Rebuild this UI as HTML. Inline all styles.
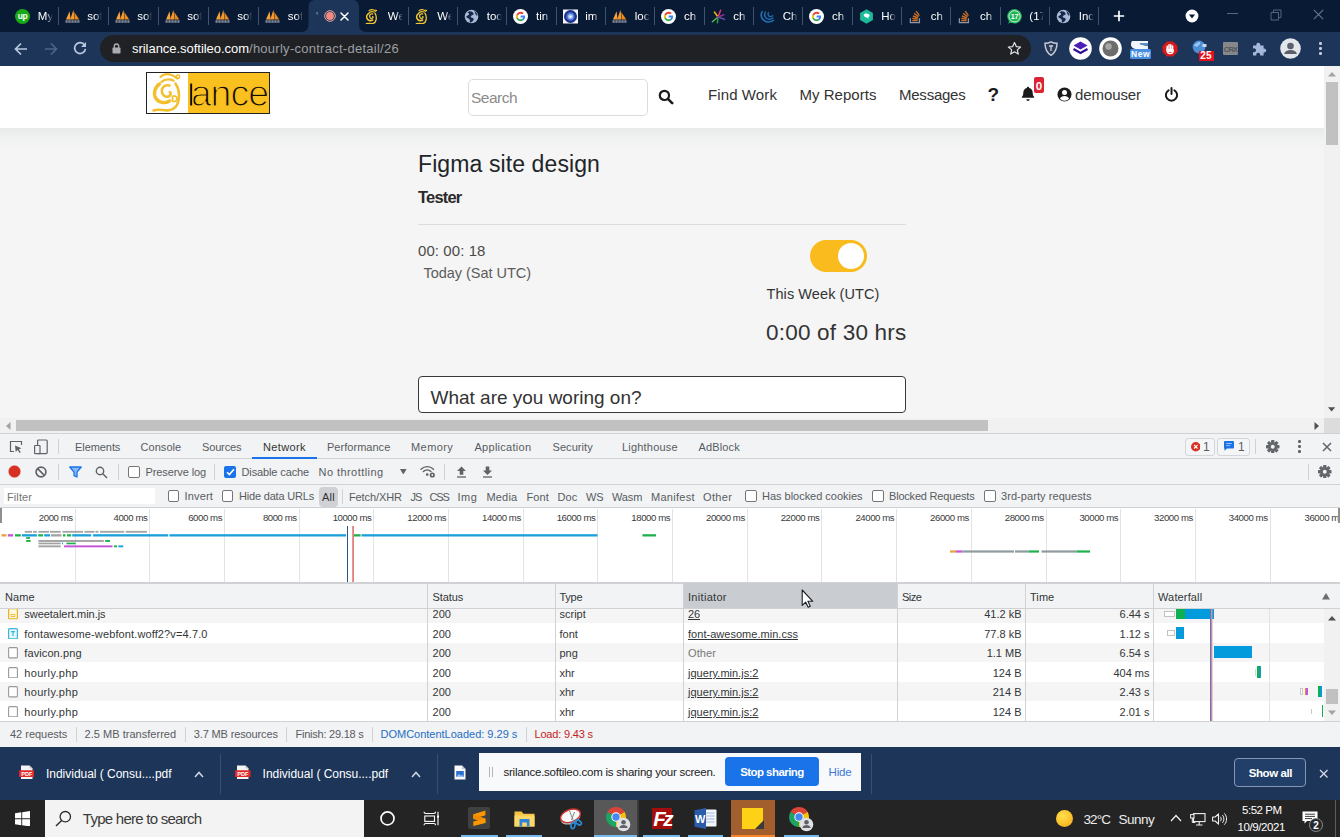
<!DOCTYPE html>
<html lang="en"><head><meta charset="utf-8"><title>hourly-contract-detail</title>
<style>
html,body{margin:0;padding:0}
body{width:1340px;height:837px;position:relative;overflow:hidden;background:#fff;font-family:"Liberation Sans",sans-serif;}
body>div,body>span,body>svg{position:absolute;}
.t{white-space:pre;}
</style></head>
<body>
<div style="left:0px;top:66px;width:1324px;height:352px;background:#f5f5f5;"></div>
<div style="left:0px;top:128px;width:1324px;height:22px;background:linear-gradient(#e8eaea,#f0f1f1 45%,#f5f5f5);"></div>
<div style="left:0px;top:66px;width:1324px;height:62px;background:#fff;"></div>
<div style="left:146px;top:72px;width:124px;height:42px;background:#fff;box-sizing:border-box;border:1px solid #222;"></div>
<div style="left:188px;top:73px;width:81px;height:40px;background:#f9c01f;"></div>
<svg style="left:146px;top:72px;" width="42" height="42" viewBox="0 0 42 42"><g fill="none" stroke="#f3bf2f" stroke-linecap="round" stroke-linejoin="round"><path d="M14.500 5C17 2.500 21 1.800 24.500 2.600 27.500 3.300 29.500 5.500 31.500 6.500" stroke-width="2.200"/><circle cx="32" cy="4.600" r="1.700" stroke-width="1.500"/><path d="M15.500 9.800C18.500 7.300 23.500 6.800 27.500 8.600" stroke-width="2.400"/><path d="M13.500 12C8.500 15.500 7 22 10 26.500 13 31 19.500 31.800 23.500 29" stroke-width="3.400"/><path d="M23.500 13.500C19.500 12.300 15.800 15 15.800 19 15.800 23 19.500 25.800 23 24.300 25 23.300 25.300 21 23.800 20.200" stroke-width="2.600"/><path d="M29.500 11.500C32.500 16 33.500 23 32.500 28.500 31.500 34 28 37.500 23 38.200 17.500 39 13 36.300 7.500 38.500" stroke-width="2.600"/><path d="M26.500 24.500C28.500 23.300 31 24.300 31 26.500 31 29 28.300 30.300 26.500 29Z" stroke-width="1.800"/></g></svg>
<span class="t" id="t0" style="top:72px;font-size:37.5px;line-height:42px;color:#120d02;left:187px;letter-spacing:-0.957px;-webkit-text-stroke:1.250px #f9c01f;"><span style="display:inline-block;letter-spacing:-4.630px;transform:scaleY(.84);transform-origin:0 34px;">l</span>ance</span>
<div style="left:468px;top:79px;width:180px;height:37px;background:#fff;box-sizing:border-box;border:1px solid #dcdcdc;border-radius:5px;"></div>
<span class="t" id="t1" style="top:89px;font-size:15.5px;line-height:17px;color:#8b8b8b;left:471px;letter-spacing:-0.521px;">Search</span>
<svg style="left:657.7px;top:88.8px;" width="16" height="16" viewBox="0 0 16 16"><circle cx="6.4" cy="6.4" r="4.6" fill="none" stroke="#1b1b1b" stroke-width="2.2"/><path d="M9.8 9.8L14.2 14.2" stroke="#1b1b1b" stroke-width="2.6" stroke-linecap="round"/></svg>
<span class="t" id="t2" style="top:86px;font-size:15px;line-height:17px;color:#333;left:708px;letter-spacing:0.102px;">Find Work</span>
<span class="t" id="t3" style="top:86px;font-size:15px;line-height:17px;color:#333;left:799.5px;letter-spacing:0.031px;">My Reports</span>
<span class="t" id="t4" style="top:86px;font-size:15px;line-height:17px;color:#333;left:899px;letter-spacing:-0.234px;">Messages</span>
<span class="t" id="t5" style="top:84px;font-size:19px;line-height:21px;color:#1b1b1b;left:987.5px;font-weight:700;">?</span>
<svg style="left:1021px;top:86px;" width="14" height="16" viewBox="0 0 14 16"><path d="M7 .8c.7 0 1.1.5 1.1 1.100 2.300.5 3.600 2.300 3.600 4.800 0 2.300.7 3.400 1.500 4.300v.7H.8v-.7C1.600 10.100 2.300 9 2.300 6.700c0-2.500 1.300-4.300 3.600-4.800C5.900 1.300 6.300.8 7 .8Z" fill="#1b1b1b"/><path d="M5.300 13.200h3.400a1.700 1.700 0 0 1-3.400 0Z" fill="#1b1b1b"/></svg>
<div style="left:1034px;top:77px;width:10px;height:16px;background:#dc2434;border-radius:2px;"></div>
<span class="t" id="t6" style="top:80px;font-size:11.5px;line-height:12px;color:#fff;left:1035.7px;font-weight:700;">0</span>
<svg style="left:1056.5px;top:87px;" width="15" height="15" viewBox="0 0 15 15"><circle cx="7.5" cy="7.5" r="7" fill="#1b1b1b"/><circle cx="7.5" cy="5.600" r="2.500" fill="#fff"/><path d="M2.900 11.700c.8-1.900 2.500-2.700 4.600-2.700s3.800.8 4.600 2.700A6 6 0 0 1 7.500 13.800 6 6 0 0 1 2.900 11.700Z" fill="#fff"/></svg>
<span class="t" id="t7" style="top:86px;font-size:15px;line-height:17px;color:#333;left:1075px;letter-spacing:-0.088px;">demouser</span>
<svg style="left:1163.5px;top:86.5px;" width="15" height="15" viewBox="0 0 15 15"><path d="M4.600 3.300A5.600 5.600 0 1 0 10.400 3.300" fill="none" stroke="#1b1b1b" stroke-width="2" stroke-linecap="round"/><path d="M7.500 1v6" stroke="#1b1b1b" stroke-width="2" stroke-linecap="round"/></svg>
<span class="t" id="t8" style="top:151px;font-size:23px;line-height:26px;color:#212529;left:418px;letter-spacing:0.103px;">Figma site design</span>
<span class="t" id="t9" style="top:188px;font-size:16.5px;line-height:18px;color:#2a2a2a;left:418px;font-weight:700;letter-spacing:-0.802px;">Tester</span>
<div style="left:418px;top:224px;width:488px;height:1px;background:#dcdcdc;"></div>
<span class="t" id="t10" style="top:242px;font-size:15px;line-height:17px;color:#4a4a4a;left:418px;letter-spacing:0.077px;">00: 00: 18</span>
<span class="t" id="t11" style="top:265px;font-size:14.5px;line-height:16px;color:#5c5c5c;left:423.5px;letter-spacing:-0.032px;">Today (Sat UTC)</span>
<div style="left:810px;top:240px;width:57px;height:32px;background:#f9bb1e;border-radius:16px;"></div>
<div style="left:838px;top:243px;width:26px;height:26px;background:#fff;border-radius:50%;"></div>
<span class="t" id="t12" style="top:286px;font-size:14.5px;line-height:16px;color:#333;left:766.5px;letter-spacing:0.085px;">This Week (UTC)</span>
<span class="t" id="t13" style="top:320px;font-size:22.5px;line-height:25px;color:#333;left:766px;letter-spacing:0.208px;">0:00 of 30 hrs</span>
<div style="left:418px;top:376px;width:488px;height:37px;background:#fff;box-sizing:border-box;border:1px solid #3a3a3a;border-radius:4px;"></div>
<span class="t" id="t14" style="top:387px;font-size:19px;line-height:21px;color:#333;left:430.5px;letter-spacing:-0.01px;">What are you woring on?</span>
<div style="left:1324px;top:66px;width:16px;height:352px;background:#f1f1f1;"></div>
<div style="left:1326px;top:82px;width:12px;height:63px;background:#c1c1c1;"></div>
<svg style="left:1328px;top:71px;" width="8" height="6" viewBox="0 0 8 6"><path d="M0 5.500L4 1L8 5.500Z" fill="#a3a3a3"/></svg>
<svg style="left:1328.4px;top:407px;" width="7.2" height="5" viewBox="0 0 7.2 5"><path d="M0 .3L3.600 4.500L7.200 .3Z" fill="#505050"/></svg>
<div style="left:0px;top:418px;width:1324px;height:16px;background:#f1f1f1;"></div>
<div style="left:1324px;top:418px;width:16px;height:16px;background:#dcdcdc;"></div>
<div style="left:16px;top:419.5px;width:972px;height:11.5px;background:#c1c1c1;"></div>
<svg style="left:5px;top:421.5px;" width="6" height="8" viewBox="0 0 6 8"><path d="M5.500 0L1 4L5.500 8Z" fill="#a3a3a3"/></svg>
<svg style="left:1314px;top:421.5px;" width="6" height="8" viewBox="0 0 6 8"><path d="M.5 0L5 4L.5 8Z" fill="#505050"/></svg>
<div style="left:0px;top:0px;width:1340px;height:31.5px;background:#091a34;"></div>
<div style="left:0px;top:31.5px;width:1340px;height:34.5px;background:#1c3558;"></div>
<svg style="left:300px;top:0px;" width="68" height="32" viewBox="0 0 68 32"><path d="M0 32 C6 32 8.5 29.5 8.5 24 V7 C8.5 2.5 11 0 15.5 0 H52 C56.5 0 59 2.5 59 7 V24 C59 29.5 61.5 32 68 32Z" fill="#1c3558"/></svg>
<div style="left:58px;top:7px;width:1px;height:18px;background:#43536f;"></div>
<div style="left:108px;top:7px;width:1px;height:18px;background:#43536f;"></div>
<div style="left:158px;top:7px;width:1px;height:18px;background:#43536f;"></div>
<div style="left:208px;top:7px;width:1px;height:18px;background:#43536f;"></div>
<div style="left:258px;top:7px;width:1px;height:18px;background:#43536f;"></div>
<div style="left:408px;top:7px;width:1px;height:18px;background:#43536f;"></div>
<div style="left:457px;top:7px;width:1px;height:18px;background:#43536f;"></div>
<div style="left:506px;top:7px;width:1px;height:18px;background:#43536f;"></div>
<div style="left:556px;top:7px;width:1px;height:18px;background:#43536f;"></div>
<div style="left:605px;top:7px;width:1px;height:18px;background:#43536f;"></div>
<div style="left:654px;top:7px;width:1px;height:18px;background:#43536f;"></div>
<div style="left:704px;top:7px;width:1px;height:18px;background:#43536f;"></div>
<div style="left:753px;top:7px;width:1px;height:18px;background:#43536f;"></div>
<div style="left:802px;top:7px;width:1px;height:18px;background:#43536f;"></div>
<div style="left:852px;top:7px;width:1px;height:18px;background:#43536f;"></div>
<div style="left:901px;top:7px;width:1px;height:18px;background:#43536f;"></div>
<div style="left:950px;top:7px;width:1px;height:18px;background:#43536f;"></div>
<div style="left:1000px;top:7px;width:1px;height:18px;background:#43536f;"></div>
<div style="left:1049px;top:7px;width:1px;height:18px;background:#43536f;"></div>
<div style="left:1098px;top:7px;width:1px;height:18px;background:#43536f;"></div>
<svg style="left:15.0px;top:8.5px;" width="15" height="15" viewBox="0 0 15 15"><circle cx="7.5" cy="7.5" r="7.5" fill="#17a916"/><text x="7.5" y="10.3" font-size="8.5" font-weight="700" text-anchor="middle" fill="#fff" font-family="Liberation Sans,sans-serif" letter-spacing="-0.4">up</text></svg>
<span class="t" id="t15" style="top:10px;font-size:11.5px;line-height:12px;color:#fff;left:37.8px;width:15px;overflow:hidden;-webkit-mask-image:linear-gradient(90deg,#000 55%,transparent 100%);mask-image:linear-gradient(90deg,#000 55%,transparent 100%);">My</span>
<svg style="left:64.5px;top:8.5px;" width="15" height="15" viewBox="0 0 15 15"><path d="M1 10.5 L4.6 2.2 L5.6 10.5Z" fill="#f6a23c"/><path d="M5.2 10.5 L8.4 0.8 L9.6 10.5Z" fill="#f39a2e"/><path d="M9.2 3 L14.3 10.5 L9.9 10.5Z" fill="#ee8a1c"/><rect x="0.5" y="11.2" width="14" height="2.6" fill="#7f8796"/><path d="M3 11.2v2.6M6 11.2v2.6M9 11.2v2.6M12 11.2v2.6" stroke="#0b1b37" stroke-width=".7"/></svg>
<span class="t" id="t16" style="top:10px;font-size:11.5px;line-height:12px;color:#fff;left:87.3px;width:15px;overflow:hidden;-webkit-mask-image:linear-gradient(90deg,#000 55%,transparent 100%);mask-image:linear-gradient(90deg,#000 55%,transparent 100%);">sof</span>
<svg style="left:114.5px;top:8.5px;" width="15" height="15" viewBox="0 0 15 15"><path d="M1 10.5 L4.6 2.2 L5.6 10.5Z" fill="#f6a23c"/><path d="M5.2 10.5 L8.4 0.8 L9.6 10.5Z" fill="#f39a2e"/><path d="M9.2 3 L14.3 10.5 L9.9 10.5Z" fill="#ee8a1c"/><rect x="0.5" y="11.2" width="14" height="2.6" fill="#7f8796"/><path d="M3 11.2v2.6M6 11.2v2.6M9 11.2v2.6M12 11.2v2.6" stroke="#0b1b37" stroke-width=".7"/></svg>
<span class="t" id="t17" style="top:10px;font-size:11.5px;line-height:12px;color:#fff;left:137.3px;width:15px;overflow:hidden;-webkit-mask-image:linear-gradient(90deg,#000 55%,transparent 100%);mask-image:linear-gradient(90deg,#000 55%,transparent 100%);">sof</span>
<svg style="left:164.5px;top:8.5px;" width="15" height="15" viewBox="0 0 15 15"><path d="M1 10.5 L4.6 2.2 L5.6 10.5Z" fill="#f6a23c"/><path d="M5.2 10.5 L8.4 0.8 L9.6 10.5Z" fill="#f39a2e"/><path d="M9.2 3 L14.3 10.5 L9.9 10.5Z" fill="#ee8a1c"/><rect x="0.5" y="11.2" width="14" height="2.6" fill="#7f8796"/><path d="M3 11.2v2.6M6 11.2v2.6M9 11.2v2.6M12 11.2v2.6" stroke="#0b1b37" stroke-width=".7"/></svg>
<span class="t" id="t18" style="top:10px;font-size:11.5px;line-height:12px;color:#fff;left:187.3px;width:15px;overflow:hidden;-webkit-mask-image:linear-gradient(90deg,#000 55%,transparent 100%);mask-image:linear-gradient(90deg,#000 55%,transparent 100%);">sof</span>
<svg style="left:214.5px;top:8.5px;" width="15" height="15" viewBox="0 0 15 15"><path d="M1 10.5 L4.6 2.2 L5.6 10.5Z" fill="#f6a23c"/><path d="M5.2 10.5 L8.4 0.8 L9.6 10.5Z" fill="#f39a2e"/><path d="M9.2 3 L14.3 10.5 L9.9 10.5Z" fill="#ee8a1c"/><rect x="0.5" y="11.2" width="14" height="2.6" fill="#7f8796"/><path d="M3 11.2v2.6M6 11.2v2.6M9 11.2v2.6M12 11.2v2.6" stroke="#0b1b37" stroke-width=".7"/></svg>
<span class="t" id="t19" style="top:10px;font-size:11.5px;line-height:12px;color:#fff;left:237.3px;width:15px;overflow:hidden;-webkit-mask-image:linear-gradient(90deg,#000 55%,transparent 100%);mask-image:linear-gradient(90deg,#000 55%,transparent 100%);">sof</span>
<svg style="left:265.0px;top:8.5px;" width="15" height="15" viewBox="0 0 15 15"><path d="M1 10.5 L4.6 2.2 L5.6 10.5Z" fill="#f6a23c"/><path d="M5.2 10.5 L8.4 0.8 L9.6 10.5Z" fill="#f39a2e"/><path d="M9.2 3 L14.3 10.5 L9.9 10.5Z" fill="#ee8a1c"/><rect x="0.5" y="11.2" width="14" height="2.6" fill="#7f8796"/><path d="M3 11.2v2.6M6 11.2v2.6M9 11.2v2.6M12 11.2v2.6" stroke="#0b1b37" stroke-width=".7"/></svg>
<span class="t" id="t20" style="top:10px;font-size:11.5px;line-height:12px;color:#fff;left:287.8px;width:15px;overflow:hidden;-webkit-mask-image:linear-gradient(90deg,#000 55%,transparent 100%);mask-image:linear-gradient(90deg,#000 55%,transparent 100%);">sof</span>
<svg style="left:365.0px;top:8.5px;" width="15" height="15" viewBox="0 0 15 15"><g transform="translate(-1.6 -0.3) scale(.39)" fill="none" stroke="#f2c530" stroke-linecap="round" stroke-linejoin="round"><path d="M14.500 5C17 2.500 21 1.800 24.500 2.600 27.500 3.300 29.500 5.500 31.500 6.500" stroke-width="3"/><circle cx="32" cy="4.600" r="1.700" stroke-width="2.400"/><path d="M15.500 9.800C18.500 7.300 23.500 6.800 27.500 8.600" stroke-width="3"/><path d="M13.500 12C8.500 15.500 7 22 10 26.500 13 31 19.500 31.800 23.500 29" stroke-width="4.200"/><path d="M23.500 13.500C19.500 12.300 15.800 15 15.800 19 15.800 23 19.500 25.800 23 24.300 25 23.300 25.300 21 23.800 20.200" stroke-width="3.400"/><path d="M29.500 11.500C32.500 16 33.500 23 32.500 28.500 31.500 34 28 37.500 23 38.200 17.500 39 13 36.300 7.500 38.500" stroke-width="3.400"/></g></svg>
<span class="t" id="t21" style="top:10px;font-size:11.5px;line-height:12px;color:#fff;left:387.8px;width:15px;overflow:hidden;-webkit-mask-image:linear-gradient(90deg,#000 55%,transparent 100%);mask-image:linear-gradient(90deg,#000 55%,transparent 100%);">We</span>
<svg style="left:414.5px;top:8.5px;" width="15" height="15" viewBox="0 0 15 15"><g transform="translate(-1.6 -0.3) scale(.39)" fill="none" stroke="#f2c530" stroke-linecap="round" stroke-linejoin="round"><path d="M14.500 5C17 2.500 21 1.800 24.500 2.600 27.500 3.300 29.500 5.500 31.500 6.500" stroke-width="3"/><circle cx="32" cy="4.600" r="1.700" stroke-width="2.400"/><path d="M15.500 9.800C18.500 7.300 23.500 6.800 27.500 8.600" stroke-width="3"/><path d="M13.500 12C8.500 15.500 7 22 10 26.500 13 31 19.500 31.800 23.500 29" stroke-width="4.200"/><path d="M23.500 13.500C19.500 12.300 15.800 15 15.800 19 15.800 23 19.500 25.800 23 24.300 25 23.300 25.300 21 23.800 20.200" stroke-width="3.400"/><path d="M29.500 11.500C32.500 16 33.500 23 32.500 28.500 31.500 34 28 37.500 23 38.200 17.500 39 13 36.300 7.500 38.500" stroke-width="3.400"/></g></svg>
<span class="t" id="t22" style="top:10px;font-size:11.5px;line-height:12px;color:#fff;left:437.3px;width:15px;overflow:hidden;-webkit-mask-image:linear-gradient(90deg,#000 55%,transparent 100%);mask-image:linear-gradient(90deg,#000 55%,transparent 100%);">We</span>
<svg style="left:463.9px;top:8.5px;" width="15" height="15" viewBox="0 0 15 15"><circle cx="7.5" cy="7.5" r="6.8" fill="#aab9d6"/><path d="M3.2 3.4c1.6.2 2.4 1.2 1.6 2.4-.8 1.1-2.3.6-2.6 2.2.8 1.5 2.6 1 3.4 2.4.6 1.1-.3 2.2.4 3.2 2.2-.2 3.6-2 3.8-3.9-.9-1.2-2.6-.6-3.2-2 .4-1.5 2.4-1.4 3.2-2.6C9.3 3 7.2 1.9 5.3 2.2Z" fill="#15284a"/><path d="M10.3 2.1c1.8 1 3 2.6 3.2 4.6-1.2-.2-2-1-2.2-2.2-.1-.9-.9-1.4-1-2.4Z" fill="#15284a"/></svg>
<span class="t" id="t23" style="top:10px;font-size:11.5px;line-height:12px;color:#fff;left:486.7px;width:15px;overflow:hidden;-webkit-mask-image:linear-gradient(90deg,#000 55%,transparent 100%);mask-image:linear-gradient(90deg,#000 55%,transparent 100%);">too</span>
<svg style="left:513.2px;top:8.5px;" width="15" height="15" viewBox="0 0 15 15"><circle cx="7.5" cy="7.5" r="7.5" fill="#fff"/><path d="M12.1 7.6c0-.35-.03-.68-.09-1H7.6v1.9h2.52a2.16 2.16 0 0 1-.94 1.41v1.18h1.52c.89-.82 1.4-2.02 1.4-3.49Z" fill="#4285f4"/><path d="M7.6 12.2c1.27 0 2.33-.42 3.1-1.13l-1.52-1.18c-.42.28-.95.45-1.58.45-1.22 0-2.26-.82-2.63-1.94H3.4v1.21A4.7 4.7 0 0 0 7.6 12.2Z" fill="#34a853"/><path d="M4.97 8.4a2.8 2.8 0 0 1 0-1.8V5.39H3.4a4.7 4.7 0 0 0 0 4.22l1.57-1.21Z" fill="#fbbc05"/><path d="M7.6 4.66c.69 0 1.31.24 1.8.7l1.34-1.34A4.5 4.5 0 0 0 7.6 2.8a4.7 4.7 0 0 0-4.2 2.59L4.97 6.6c.37-1.12 1.41-1.94 2.63-1.94Z" fill="#ea4335"/></svg>
<span class="t" id="t24" style="top:10px;font-size:11.5px;line-height:12px;color:#fff;left:536.0px;width:15px;overflow:hidden;-webkit-mask-image:linear-gradient(90deg,#000 55%,transparent 100%);mask-image:linear-gradient(90deg,#000 55%,transparent 100%);">tin</span>
<svg style="left:562.5px;top:8.5px;" width="15" height="15" viewBox="0 0 15 15"><rect x="0" y="0.5" width="15" height="14" fill="#f4f6fb"/><circle cx="7.5" cy="7.5" r="6.5" fill="#1c2f8c"/><circle cx="7.5" cy="7.5" r="4.3" fill="#4a74cf"/><circle cx="7.5" cy="7.5" r="2.6" fill="#9dbcf0"/><path d="M5.600 6.800h3.800L7.500 9.300Z" fill="#eef4ff"/></svg>
<span class="t" id="t25" style="top:10px;font-size:11.5px;line-height:12px;color:#fff;left:585.3px;width:15px;overflow:hidden;-webkit-mask-image:linear-gradient(90deg,#000 55%,transparent 100%);mask-image:linear-gradient(90deg,#000 55%,transparent 100%);">im</span>
<svg style="left:611.9px;top:8.5px;" width="15" height="15" viewBox="0 0 15 15"><path d="M1 10.5 L4.6 2.2 L5.6 10.5Z" fill="#f6a23c"/><path d="M5.2 10.5 L8.4 0.8 L9.6 10.5Z" fill="#f39a2e"/><path d="M9.2 3 L14.3 10.5 L9.9 10.5Z" fill="#ee8a1c"/><rect x="0.5" y="11.2" width="14" height="2.6" fill="#7f8796"/><path d="M3 11.2v2.6M6 11.2v2.6M9 11.2v2.6M12 11.2v2.6" stroke="#0b1b37" stroke-width=".7"/></svg>
<span class="t" id="t26" style="top:10px;font-size:11.5px;line-height:12px;color:#fff;left:634.6999999999999px;width:15px;overflow:hidden;-webkit-mask-image:linear-gradient(90deg,#000 55%,transparent 100%);mask-image:linear-gradient(90deg,#000 55%,transparent 100%);">loc</span>
<svg style="left:661.2px;top:8.5px;" width="15" height="15" viewBox="0 0 15 15"><circle cx="7.5" cy="7.5" r="7.5" fill="#fff"/><path d="M12.1 7.6c0-.35-.03-.68-.09-1H7.6v1.9h2.52a2.16 2.16 0 0 1-.94 1.41v1.18h1.52c.89-.82 1.4-2.02 1.4-3.49Z" fill="#4285f4"/><path d="M7.6 12.2c1.27 0 2.33-.42 3.1-1.13l-1.52-1.18c-.42.28-.95.45-1.58.45-1.22 0-2.26-.82-2.63-1.94H3.4v1.21A4.7 4.7 0 0 0 7.6 12.2Z" fill="#34a853"/><path d="M4.97 8.4a2.8 2.8 0 0 1 0-1.8V5.39H3.4a4.7 4.7 0 0 0 0 4.22l1.57-1.21Z" fill="#fbbc05"/><path d="M7.6 4.66c.69 0 1.31.24 1.8.7l1.34-1.34A4.5 4.5 0 0 0 7.6 2.8a4.7 4.7 0 0 0-4.2 2.59L4.97 6.6c.37-1.12 1.41-1.94 2.63-1.94Z" fill="#ea4335"/></svg>
<span class="t" id="t27" style="top:10px;font-size:11.5px;line-height:12px;color:#fff;left:684.0px;width:15px;overflow:hidden;-webkit-mask-image:linear-gradient(90deg,#000 55%,transparent 100%);mask-image:linear-gradient(90deg,#000 55%,transparent 100%);">ch</span>
<svg style="left:710.5px;top:8.5px;" width="15" height="15" viewBox="0 0 15 15"><g stroke-linecap="round" stroke-width="1.5" fill="none"><path d="M7 8L9.6 1.2" stroke="#e23b6d"/><path d="M7 8L3.4 3" stroke="#f2b21d"/><path d="M7 8L1.4 12.8" stroke="#58b947"/><path d="M7 8L6.4 13.8" stroke="#2e9e4d"/><path d="M7 8L13.6 10.4" stroke="#6b4fb3"/><path d="M7 8L12.8 5.8" stroke="#8e2f8c"/></g></svg>
<span class="t" id="t28" style="top:10px;font-size:11.5px;line-height:12px;color:#fff;left:733.3px;width:15px;overflow:hidden;-webkit-mask-image:linear-gradient(90deg,#000 55%,transparent 100%);mask-image:linear-gradient(90deg,#000 55%,transparent 100%);">ch</span>
<svg style="left:759.9px;top:8.5px;" width="15" height="15" viewBox="0 0 15 15"><g fill="none" stroke="#1f6cb0" stroke-linecap="round"><path d="M2.2 2.6C-.6 7 2.8 13 8.6 13c1.8 0 3.4-.5 4.8-1.6" stroke-width="1.7"/><path d="M5.4 3.2C3.4 6.4 5.6 10.2 9.4 10.2c1.3 0 2.5-.4 3.5-1.2" stroke-width="1.5"/><path d="M8.4 3.6C7.4 5.6 8.6 7.6 10.6 7.6c.8 0 1.5-.3 2.1-.8" stroke-width="1.4"/></g></svg>
<span class="t" id="t29" style="top:10px;font-size:11.5px;line-height:12px;color:#fff;left:782.6999999999999px;width:15px;overflow:hidden;-webkit-mask-image:linear-gradient(90deg,#000 55%,transparent 100%);mask-image:linear-gradient(90deg,#000 55%,transparent 100%);">Ch</span>
<svg style="left:809.2px;top:8.5px;" width="15" height="15" viewBox="0 0 15 15"><circle cx="7.5" cy="7.5" r="7.5" fill="#fff"/><path d="M12.1 7.6c0-.35-.03-.68-.09-1H7.6v1.9h2.52a2.16 2.16 0 0 1-.94 1.41v1.18h1.52c.89-.82 1.4-2.02 1.4-3.49Z" fill="#4285f4"/><path d="M7.6 12.2c1.27 0 2.33-.42 3.1-1.13l-1.52-1.18c-.42.28-.95.45-1.58.45-1.22 0-2.26-.82-2.63-1.94H3.4v1.21A4.7 4.7 0 0 0 7.6 12.2Z" fill="#34a853"/><path d="M4.97 8.4a2.8 2.8 0 0 1 0-1.8V5.39H3.4a4.7 4.7 0 0 0 0 4.22l1.57-1.21Z" fill="#fbbc05"/><path d="M7.6 4.66c.69 0 1.31.24 1.8.7l1.34-1.34A4.5 4.5 0 0 0 7.6 2.8a4.7 4.7 0 0 0-4.2 2.59L4.97 6.6c.37-1.12 1.41-1.94 2.63-1.94Z" fill="#ea4335"/></svg>
<span class="t" id="t30" style="top:10px;font-size:11.5px;line-height:12px;color:#fff;left:832.0px;width:15px;overflow:hidden;-webkit-mask-image:linear-gradient(90deg,#000 55%,transparent 100%);mask-image:linear-gradient(90deg,#000 55%,transparent 100%);">ch</span>
<svg style="left:858.5px;top:8.5px;" width="15" height="15" viewBox="0 0 15 15"><path d="M7.5 0.3L13.9 3.9V11.1L7.5 14.7L1.1 11.1V3.9Z" fill="#1cb99a"/><path d="M4.6 5.6c1-1.3 3.6-1.6 5.2-.4.8.6 1 1.6.6 2.4l-1.2.3.3 2.2-1.6-1.7c-1.6.2-3.2-.9-3.3-2.8Z" fill="#fff"/></svg>
<span class="t" id="t31" style="top:10px;font-size:11.5px;line-height:12px;color:#fff;left:881.3px;width:15px;overflow:hidden;-webkit-mask-image:linear-gradient(90deg,#000 55%,transparent 100%);mask-image:linear-gradient(90deg,#000 55%,transparent 100%);">Ho</span>
<svg style="left:907.9px;top:8.5px;" width="15" height="15" viewBox="0 0 15 15"><path d="M2.4 9.2v4.4h9V9.2" fill="none" stroke="#8d96a6" stroke-width="1.3"/><g stroke="#cf6e22" stroke-width="1.4"><path d="M4.2 11.6h5.4"/><path d="M4.3 9.4l5.3.9"/><path d="M4.9 7l5 2"/><path d="M6.2 4.4l4.4 3.3"/><path d="M8.2 2.2l3.2 4.4"/></g></svg>
<span class="t" id="t32" style="top:10px;font-size:11.5px;line-height:12px;color:#fff;left:930.6999999999999px;width:15px;overflow:hidden;-webkit-mask-image:linear-gradient(90deg,#000 55%,transparent 100%);mask-image:linear-gradient(90deg,#000 55%,transparent 100%);">ch</span>
<svg style="left:957.2px;top:8.5px;" width="15" height="15" viewBox="0 0 15 15"><path d="M2.4 9.2v4.4h9V9.2" fill="none" stroke="#8d96a6" stroke-width="1.3"/><g stroke="#cf6e22" stroke-width="1.4"><path d="M4.2 11.6h5.4"/><path d="M4.3 9.4l5.3.9"/><path d="M4.9 7l5 2"/><path d="M6.2 4.4l4.4 3.3"/><path d="M8.2 2.2l3.2 4.4"/></g></svg>
<span class="t" id="t33" style="top:10px;font-size:11.5px;line-height:12px;color:#fff;left:980.0px;width:15px;overflow:hidden;-webkit-mask-image:linear-gradient(90deg,#000 55%,transparent 100%);mask-image:linear-gradient(90deg,#000 55%,transparent 100%);">ch</span>
<svg style="left:1006.5px;top:8.5px;" width="15" height="15" viewBox="0 0 15 15"><circle cx="7.5" cy="7.3" r="7.3" fill="#1fb355"/><path d="M1.2 14.6l1.3-3.6 2.4 2.4Z" fill="#1fb355"/><circle cx="7.5" cy="7.3" r="5.6" fill="none" stroke="#fff" stroke-width=".8"/><text x="7.5" y="10" font-size="7.2" font-weight="700" text-anchor="middle" fill="#fff" font-family="Liberation Sans,sans-serif" letter-spacing="-0.3">17</text></svg>
<span class="t" id="t34" style="top:10px;font-size:11.5px;line-height:12px;color:#fff;left:1029.3px;width:15px;overflow:hidden;-webkit-mask-image:linear-gradient(90deg,#000 55%,transparent 100%);mask-image:linear-gradient(90deg,#000 55%,transparent 100%);">(17</span>
<svg style="left:1055.9px;top:8.5px;" width="15" height="15" viewBox="0 0 15 15"><circle cx="7.5" cy="7.5" r="6.8" fill="#aab9d6"/><path d="M3.2 3.4c1.6.2 2.4 1.2 1.6 2.4-.8 1.1-2.3.6-2.6 2.2.8 1.5 2.6 1 3.4 2.4.6 1.1-.3 2.2.4 3.2 2.2-.2 3.6-2 3.8-3.9-.9-1.2-2.6-.6-3.2-2 .4-1.5 2.4-1.4 3.2-2.6C9.3 3 7.2 1.9 5.3 2.2Z" fill="#15284a"/><path d="M10.3 2.1c1.8 1 3 2.6 3.2 4.6-1.2-.2-2-1-2.2-2.2-.1-.9-.9-1.4-1-2.4Z" fill="#15284a"/></svg>
<span class="t" id="t35" style="top:10px;font-size:11.5px;line-height:12px;color:#fff;left:1078.7px;width:15px;overflow:hidden;-webkit-mask-image:linear-gradient(90deg,#000 55%,transparent 100%);mask-image:linear-gradient(90deg,#000 55%,transparent 100%);">Inc</span>
<span class="t" id="t36" style="top:10px;font-size:11.5px;line-height:12px;color:#7fa3cf;left:316px;">'</span>
<svg style="left:323.5px;top:10px;" width="12" height="12" viewBox="0 0 12 12"><circle cx="6" cy="6" r="5.3" fill="none" stroke="#e7a7a6" stroke-width="1"/><circle cx="6" cy="6" r="3.9" fill="#f28b82"/></svg>
<svg style="left:339.5px;top:11.5px;" width="9" height="9" viewBox="0 0 9 9"><path d="M1 1L8 8M8 1L1 8" stroke="#fff" stroke-width="1.5" stroke-linecap="round"/></svg>
<svg style="left:1113px;top:9.5px;" width="12" height="12" viewBox="0 0 12 12"><path d="M6 .8V11.2M.8 6H11.2" stroke="#fff" stroke-width="1.7"/></svg>
<svg style="left:1184.5px;top:8.5px;" width="14" height="14" viewBox="0 0 14 14"><circle cx="7" cy="7" r="6.4" fill="#fff"/><path d="M3.9 5.4h6.2L7 9.4Z" fill="#0b1b37"/></svg>
<div style="left:1227px;top:13px;width:11px;height:1px;background:#5a6982;"></div>
<svg style="left:1270px;top:9px;" width="12" height="12" viewBox="0 0 12 12"><path d="M1 3.5h7.5V11H1Z M3.5 3.5V1H11V8.5H8.5" fill="none" stroke="#55647e" stroke-width="1"/></svg>
<svg style="left:1313px;top:9px;" width="11" height="11" viewBox="0 0 11 11"><path d="M.8 .8L10.2 10.2M10.2 .8L.8 10.2" stroke="#6a7890" stroke-width="1.1"/></svg>
<svg style="left:13.5px;top:41.5px;" width="14" height="14" viewBox="0 0 14 14"><path d="M13 7H2M7 1.5L1.5 7L7 12.5" fill="none" stroke="#b9c8de" stroke-width="1.7"/></svg>
<svg style="left:43.5px;top:41.5px;" width="14" height="14" viewBox="0 0 14 14"><path d="M1 7H12M7 1.5L12.5 7L7 12.5" fill="none" stroke="#4e6487" stroke-width="1.7"/></svg>
<svg style="left:73px;top:41px;" width="14" height="14" viewBox="0 0 14 14"><path d="M11.6 4.2A5.4 5.4 0 1 0 12.4 7.8" fill="none" stroke="#b9c8de" stroke-width="1.7"/><path d="M13 1v5H8Z" fill="#b9c8de"/></svg>
<div style="left:100px;top:35px;width:931px;height:27px;background:#202124;border-radius:13.5px;"></div>
<svg style="left:112px;top:42.5px;" width="9" height="11" viewBox="0 0 9 11"><rect x=".5" y="4.6" width="8" height="6" rx=".8" fill="#a9adb3"/><path d="M2.3 5V3.2a2.2 2.2 0 0 1 4.4 0V5" fill="none" stroke="#a9adb3" stroke-width="1.3"/></svg>
<span class="t" id="t37" style="top:41px;font-size:13px;line-height:15px;color:#fff;left:132px;letter-spacing:-0.037px;">srilance.softileo.com</span>
<span class="t" id="t38" style="top:41px;font-size:13px;line-height:15px;color:#9aa0a6;left:249px;letter-spacing:0.266px;">/hourly-contract-detail/26</span>
<svg style="left:1006.5px;top:40.5px;" width="15" height="15" viewBox="0 0 15 15"><path d="M7.5 1.6l1.8 4 4.3.4-3.3 2.9 1 4.2-3.8-2.3-3.8 2.3 1-4.2L1.4 6l4.3-.4Z" fill="none" stroke="#dfe3ea" stroke-width="1.2" stroke-linejoin="round"/></svg>
<svg style="left:1044px;top:41px;" width="14" height="15" viewBox="0 0 14 15"><path d="M7 .8C5 2 3 2.3 1 2.3c0 5 1.5 9.2 6 12 4.5-2.8 6-7 6-12-2 0-4-.3-6-1.5Z" fill="#2c3c58" stroke="#c3cad6" stroke-width="1.500"/><path d="M5 5h4M7 5v5" stroke="#c9d0dc" stroke-width="1.3"/></svg>
<svg style="left:1069px;top:37px;" width="23" height="23" viewBox="0 0 23 23"><circle cx="11.5" cy="11.5" r="11.3" fill="#fff"/><path d="M11.5 4.5l7 4-7 4-7-4Z" fill="#4a1fb8"/><path d="M4.5 12l7 4 7-4" fill="none" stroke="#2f0f99" stroke-width="2.2"/></svg>
<svg style="left:1099px;top:37px;" width="23" height="23" viewBox="0 0 23 23"><circle cx="11.5" cy="11.5" r="11.3" fill="#fff"/><circle cx="11.5" cy="11.5" r="8" fill="#6d6d6d"/><circle cx="9.5" cy="9.5" r="3.2" fill="#a8a8a8"/></svg>
<svg style="left:1131px;top:41px;" width="19" height="8" viewBox="0 0 19 8"><path d="M1 0H17V2.600H8.500C10 4 13 4.500 17 5.200V8H6C2 8 0 6 0 3.500 0 1.800 .4 .8 1 0Z" fill="#f2f6fc"/><path d="M8.500 2.600H17V5.200C13 4.500 10 4 8.500 2.600Z" fill="#4f8fcf"/></svg>
<div style="left:1129.5px;top:49px;width:21.5px;height:10px;background:#4a90e2;border-radius:1.5px;"></div>
<span class="t" id="t39" style="top:49px;font-size:8.5px;line-height:10px;color:#fff;left:1131px;font-weight:700;letter-spacing:0.505px;">New</span>
<svg style="left:1161.5px;top:40.5px;" width="16" height="16" viewBox="0 0 16 16"><path d="M5 .5h6L15.5 5v6L11 15.5H5L.5 11V5Z" fill="#d71a1a"/><path d="M5.2 8.5V5.2M7 8V3.8M8.8 8V3.8M10.6 8.5V5M4.8 8c0 3 1.4 4.6 3.4 4.6s3-1.5 3-3.6" fill="none" stroke="#fff" stroke-width="1.5" stroke-linecap="round"/><path d="M5.2 8h5.6v3H6Z" fill="#fff"/></svg>
<svg style="left:1192px;top:40px;" width="16" height="14" viewBox="0 0 16 14"><circle cx="7" cy="7" r="6.4" fill="#4d8fd6"/><path d="M2 5c2-1 3-3 6-3 1 2-1 3-2 4s-3 1-4-1Z" fill="#9cc7f2"/><rect x="10.5" y="4" width="4" height="3" fill="#cfd8e6"/></svg>
<div style="left:1198.5px;top:50.5px;width:15px;height:10.5px;background:#e4111b;"></div>
<span class="t" id="t40" style="top:50px;font-size:10px;line-height:11px;color:#fff;left:1200.3px;font-weight:700;letter-spacing:0.188px;">25</span>
<div style="left:1222.5px;top:42px;width:15.5px;height:12.5px;background:#85878b;border-radius:1px;"></div>
<span class="t" id="t41" style="top:45px;font-size:7.5px;line-height:9px;color:#53555a;left:1223.8px;font-weight:700;letter-spacing:-0.781px;">CRX</span>
<svg style="left:1252px;top:41px;" width="15.5" height="15" viewBox="0 0 15.5 15"><path d="M1 4.400h3.400a2 2 0 1 1 3.800 0H11.600V7.600a2 2 0 1 1 0 3.800V14.600H8a2 2 0 1 0-3.600 0H1V11a2 2 0 1 0 0-3.400Z" fill="#a3b8da"/></svg>
<svg style="left:1279.5px;top:38px;" width="21" height="21" viewBox="0 0 21 21"><circle cx="10.5" cy="10.5" r="10.3" fill="#e3e6eb"/><circle cx="10.5" cy="8" r="3.3" fill="#5a5f69"/><path d="M4.2 16c.6-3 3.2-4 6.3-4s5.700 1 6.3 4Z" fill="#5a5f69"/></svg>
<div style="left:1319px;top:42px;width:2.6px;height:2.6px;background:#c3cee0;border-radius:50%;"></div>
<div style="left:1319px;top:47px;width:2.6px;height:2.6px;background:#c3cee0;border-radius:50%;"></div>
<div style="left:1319px;top:52px;width:2.6px;height:2.6px;background:#c3cee0;border-radius:50%;"></div>
<div style="left:0px;top:434px;width:1340px;height:313px;background:#fff;"></div>
<div style="left:0px;top:434px;width:1340px;height:74px;background:#f1f3f4;"></div>
<div style="left:0px;top:433px;width:1340px;height:1px;background:#cfd1d5;"></div>
<div style="left:0px;top:458px;width:1340px;height:1px;background:#cfd1d5;"></div>
<div style="left:0px;top:484px;width:1340px;height:1px;background:#cfd1d5;"></div>
<div style="left:0px;top:507px;width:1340px;height:1px;background:#cfd1d5;"></div>
<svg style="left:9px;top:439.5px;" width="14" height="14" viewBox="0 0 14 14"><path d="M12.500 5V1.500H1.500V11.500H5" fill="none" stroke="#5f6368" stroke-width="1.200"/><path d="M6 5.500L12.500 8.300L9.800 9.300L11.800 12.300L10.600 13L8.700 10L6.700 11.800Z" fill="#5f6368"/></svg>
<svg style="left:33.5px;top:438.5px;" width="14" height="16" viewBox="0 0 14 16"><rect x="3.600" y="1" width="9.600" height="13.600" rx="1" fill="none" stroke="#5f6368" stroke-width="1.200"/><rect x=".6" y="6.500" width="5.400" height="8.100" rx=".6" fill="#f1f3f4" stroke="#5f6368" stroke-width="1.200"/></svg>
<div style="left:58px;top:439px;width:1px;height:15px;background:#cfd1d5;"></div>
<span class="t" id="t42" style="top:441px;font-size:11px;line-height:12px;color:#595c61;left:75px;letter-spacing:-0.07px;">Elements</span>
<span class="t" id="t43" style="top:441px;font-size:11px;line-height:12px;color:#595c61;left:140.5px;letter-spacing:0.063px;">Console</span>
<span class="t" id="t44" style="top:441px;font-size:11px;line-height:12px;color:#595c61;left:202px;letter-spacing:-0.151px;">Sources</span>
<span class="t" id="t45" style="top:441px;font-size:11px;line-height:12px;color:#333;left:263px;letter-spacing:0.351px;">Network</span>
<span class="t" id="t46" style="top:441px;font-size:11px;line-height:12px;color:#595c61;left:327px;letter-spacing:0.029px;">Performance</span>
<span class="t" id="t47" style="top:441px;font-size:11px;line-height:12px;color:#595c61;left:411px;letter-spacing:0.428px;">Memory</span>
<span class="t" id="t48" style="top:441px;font-size:11px;line-height:12px;color:#595c61;left:474.5px;letter-spacing:0.27px;">Application</span>
<span class="t" id="t49" style="top:441px;font-size:11px;line-height:12px;color:#595c61;left:552.5px;letter-spacing:0.069px;">Security</span>
<span class="t" id="t50" style="top:441px;font-size:11px;line-height:12px;color:#595c61;left:622px;letter-spacing:0.197px;">Lighthouse</span>
<span class="t" id="t51" style="top:441px;font-size:11px;line-height:12px;color:#595c61;left:698.5px;letter-spacing:0.134px;">AdBlock</span>
<div style="left:252px;top:457px;width:64.5px;height:2px;background:#1a73e8;"></div>
<div style="left:1185px;top:437.5px;width:29.7px;height:18px;background:#f4f5f6;box-sizing:border-box;border:1px solid #d3d6da;border-radius:3px;"></div>
<div style="left:1217.2px;top:437.5px;width:32.5px;height:18px;background:#f4f5f6;box-sizing:border-box;border:1px solid #d3d6da;border-radius:3px;"></div>
<svg style="left:1190.7px;top:442px;" width="9.5" height="9.5" viewBox="0 0 9.5 9.5"><circle cx="4.750" cy="4.750" r="4.750" fill="#d93025"/><path d="M3 3L6.500 6.500M6.500 3L3 6.500" stroke="#fff" stroke-width="1.100"/></svg>
<span class="t" id="t52" style="top:440px;font-size:12px;line-height:14px;color:#595c61;left:1203px;">1</span>
<svg style="left:1224px;top:441.4px;" width="10" height="10" viewBox="0 0 10 10"><path d="M1 0h8a1 1 0 0 1 1 1v5.500a1 1 0 0 1-1 1H3L.5 9.800V7.500H0V1a1 1 0 0 1 1-1Z" fill="#1a73e8"/><path d="M2.200 2.500h5.600M2.200 4.600h4" stroke="#9cc2f7" stroke-width="1"/></svg>
<span class="t" id="t53" style="top:440px;font-size:12px;line-height:14px;color:#595c61;left:1238px;">1</span>
<div style="left:1255.2px;top:439px;width:1px;height:14.5px;background:#cfd1d5;"></div>
<svg style="left:1266px;top:439.5px;" width="13.5" height="13.5" viewBox="0 0 14 14"><g transform="translate(7 7)"><rect x="-1.7" y="-7" width="3.4" height="4" rx=".6" transform="rotate(0)" fill="#63676c"/><rect x="-1.7" y="-7" width="3.4" height="4" rx=".6" transform="rotate(45)" fill="#63676c"/><rect x="-1.7" y="-7" width="3.4" height="4" rx=".6" transform="rotate(90)" fill="#63676c"/><rect x="-1.7" y="-7" width="3.4" height="4" rx=".6" transform="rotate(135)" fill="#63676c"/><rect x="-1.7" y="-7" width="3.4" height="4" rx=".6" transform="rotate(180)" fill="#63676c"/><rect x="-1.7" y="-7" width="3.4" height="4" rx=".6" transform="rotate(225)" fill="#63676c"/><rect x="-1.7" y="-7" width="3.4" height="4" rx=".6" transform="rotate(270)" fill="#63676c"/><rect x="-1.7" y="-7" width="3.4" height="4" rx=".6" transform="rotate(315)" fill="#63676c"/><circle r="4.700" fill="#63676c"/><circle r="2" fill="#f1f3f4"/></g></svg>
<div style="left:1298px;top:440.3px;width:2.6px;height:2.6px;background:#5f6368;border-radius:50%;"></div>
<div style="left:1298px;top:445.3px;width:2.6px;height:2.6px;background:#5f6368;border-radius:50%;"></div>
<div style="left:1298px;top:450.3px;width:2.6px;height:2.6px;background:#5f6368;border-radius:50%;"></div>
<svg style="left:1322px;top:441.5px;" width="10" height="10" viewBox="0 0 10 10"><path d="M1 1L9 9M9 1L1 9" stroke="#5f6368" stroke-width="1.500"/></svg>
<div style="left:8px;top:465px;width:13px;height:13px;border-radius:50%;background:radial-gradient(circle,#d93025 0,#d93025 58%,rgba(217,48,37,.25) 70%,rgba(217,48,37,0) 100%);"></div>
<svg style="left:35px;top:465.5px;" width="12" height="12" viewBox="0 0 12 12"><circle cx="6" cy="6" r="4.900" fill="none" stroke="#5f6368" stroke-width="1.700"/><path d="M2.600 2.600L9.400 9.400" stroke="#5f6368" stroke-width="1.600"/></svg>
<div style="left:58px;top:464px;width:1px;height:16px;background:#cfd1d5;"></div>
<svg style="left:68.5px;top:466px;" width="13" height="12" viewBox="0 0 13 12"><path d="M.8 1h11.400L8 6.200V11L5 9.600V6.200Z" fill="#8ab4f8" stroke="#1a73e8" stroke-width="1.300" stroke-linejoin="round"/></svg>
<svg style="left:95px;top:465.5px;" width="13" height="13" viewBox="0 0 13 13"><circle cx="5" cy="5" r="3.700" fill="none" stroke="#5f6368" stroke-width="1.400"/><path d="M7.800 7.800L12 12" stroke="#5f6368" stroke-width="1.500"/></svg>
<div style="left:118px;top:464px;width:1px;height:16px;background:#cfd1d5;"></div>
<div style="left:128px;top:466px;width:11.5px;height:11.5px;background:#fff;box-sizing:border-box;border:1px solid #767676;border-radius:2px;"></div>
<span class="t" id="t54" style="top:466px;font-size:11px;line-height:12px;color:#595c61;left:145.5px;letter-spacing:-0.105px;">Preserve log</span>
<div style="left:214px;top:464px;width:1px;height:16px;background:#cfd1d5;"></div>
<div style="left:224px;top:466px;width:11.5px;height:11.5px;background:#1a73e8;border-radius:2px;"></div>
<svg style="left:225.5px;top:468px;" width="9" height="8" viewBox="0 0 9 8"><path d="M1 4.2L3.4 6.600L8 1.300" fill="none" stroke="#fff" stroke-width="1.600"/></svg>
<span class="t" id="t55" style="top:466px;font-size:11px;line-height:12px;color:#595c61;left:241.5px;letter-spacing:-0.123px;">Disable cache</span>
<span class="t" id="t56" style="top:466px;font-size:11px;line-height:12px;color:#595c61;left:318.5px;letter-spacing:0.438px;">No throttling</span>
<svg style="left:400.2px;top:468.7px;" width="6.6" height="5.6" viewBox="0 0 6.6 5.6"><path d="M0 0h6.600L3.300 5.600Z" fill="#5f6368"/></svg>
<svg style="left:420px;top:465px;" width="16" height="13" viewBox="0 0 16 13"><g fill="none" stroke="#5f6368" stroke-width="1.400" stroke-linecap="round"><path d="M1 4.200C4.500 .8 10 .8 13.500 4.200"/><path d="M3.300 6.600C5.600 4.500 8.800 4.500 11 6.600"/></g><circle cx="7.200" cy="9.600" r="1.300" fill="#5f6368"/><circle cx="12.300" cy="10" r="2.600" fill="#5f6368"/><circle cx="12.300" cy="10" r=".9" fill="#f1f3f4"/></svg>
<div style="left:444px;top:464px;width:1px;height:16px;background:#cfd1d5;"></div>
<svg style="left:456px;top:465.5px;" width="11" height="12" viewBox="0 0 11 12"><path d="M5.500 .5L10 5H7.300V8.800H3.700V5H1Z" fill="#5f6368"/><path d="M1 11h9" stroke="#5f6368" stroke-width="1.300"/></svg>
<svg style="left:482px;top:465.5px;" width="11" height="12" viewBox="0 0 11 12"><path d="M5.500 9L10 4.500H7.300V.6H3.700V4.500H1Z" fill="#5f6368"/><path d="M1 11h9" stroke="#5f6368" stroke-width="1.300"/></svg>
<div style="left:1307.5px;top:464px;width:1px;height:16px;background:#cfd1d5;"></div>
<svg style="left:1318px;top:464.5px;" width="13.5" height="13.5" viewBox="0 0 14 14"><g transform="translate(7 7)"><rect x="-1.7" y="-7" width="3.4" height="4" rx=".6" transform="rotate(0)" fill="#63676c"/><rect x="-1.7" y="-7" width="3.4" height="4" rx=".6" transform="rotate(45)" fill="#63676c"/><rect x="-1.7" y="-7" width="3.4" height="4" rx=".6" transform="rotate(90)" fill="#63676c"/><rect x="-1.7" y="-7" width="3.4" height="4" rx=".6" transform="rotate(135)" fill="#63676c"/><rect x="-1.7" y="-7" width="3.4" height="4" rx=".6" transform="rotate(180)" fill="#63676c"/><rect x="-1.7" y="-7" width="3.4" height="4" rx=".6" transform="rotate(225)" fill="#63676c"/><rect x="-1.7" y="-7" width="3.4" height="4" rx=".6" transform="rotate(270)" fill="#63676c"/><rect x="-1.7" y="-7" width="3.4" height="4" rx=".6" transform="rotate(315)" fill="#63676c"/><circle r="4.700" fill="#63676c"/><circle r="2" fill="#f1f3f4"/></g></svg>
<div style="left:4px;top:487.5px;width:151px;height:16.5px;background:#fff;"></div>
<span class="t" id="t57" style="top:491px;font-size:11px;line-height:12px;color:#757575;left:7px;letter-spacing:0.091px;">Filter</span>
<div style="left:167.5px;top:490px;width:11.5px;height:11.5px;background:#fff;box-sizing:border-box;border:1px solid #767676;border-radius:2px;"></div>
<span class="t" id="t58" style="top:490px;font-size:11px;line-height:12px;color:#595c61;left:184.5px;letter-spacing:0.164px;">Invert</span>
<div style="left:221.5px;top:490px;width:11.5px;height:11.5px;background:#fff;box-sizing:border-box;border:1px solid #767676;border-radius:2px;"></div>
<span class="t" id="t59" style="top:490px;font-size:11px;line-height:12px;color:#595c61;left:239px;letter-spacing:-0.19px;">Hide data URLs</span>
<div style="left:319px;top:486.5px;width:19px;height:20px;background:#cfd1d4;border-radius:4px;"></div>
<span class="t" id="t60" style="top:491px;font-size:11px;line-height:12px;color:#333;left:322px;letter-spacing:0.255px;">All</span>
<div style="left:342px;top:489px;width:1px;height:15px;background:#cfd1d5;"></div>
<span class="t" id="t61" style="top:491px;font-size:11px;line-height:12px;color:#595c61;left:349px;letter-spacing:-0.111px;">Fetch/XHR</span>
<span class="t" id="t62" style="top:491px;font-size:11px;line-height:12px;color:#595c61;left:410.5px;letter-spacing:-1.022px;">JS</span>
<span class="t" id="t63" style="top:491px;font-size:11px;line-height:12px;color:#595c61;left:429.5px;letter-spacing:-1.108px;">CSS</span>
<span class="t" id="t64" style="top:491px;font-size:11px;line-height:12px;color:#595c61;left:457.5px;letter-spacing:0.485px;">Img</span>
<span class="t" id="t65" style="top:491px;font-size:11px;line-height:12px;color:#595c61;left:486.5px;letter-spacing:0.166px;">Media</span>
<span class="t" id="t66" style="top:491px;font-size:11px;line-height:12px;color:#595c61;left:526.5px;letter-spacing:0.071px;">Font</span>
<span class="t" id="t67" style="top:491px;font-size:11px;line-height:12px;color:#595c61;left:557.5px;letter-spacing:0.079px;">Doc</span>
<span class="t" id="t68" style="top:491px;font-size:11px;line-height:12px;color:#595c61;left:586px;letter-spacing:-0.217px;">WS</span>
<span class="t" id="t69" style="top:491px;font-size:11px;line-height:12px;color:#595c61;left:612px;letter-spacing:-0.116px;">Wasm</span>
<span class="t" id="t70" style="top:491px;font-size:11px;line-height:12px;color:#595c61;left:651px;letter-spacing:0.278px;">Manifest</span>
<span class="t" id="t71" style="top:491px;font-size:11px;line-height:12px;color:#595c61;left:703px;letter-spacing:0.357px;">Other</span>
<div style="left:745.4px;top:490px;width:11.5px;height:11.5px;background:#fff;box-sizing:border-box;border:1px solid #767676;border-radius:2px;"></div>
<span class="t" id="t72" style="top:490px;font-size:11px;line-height:12px;color:#595c61;left:762px;letter-spacing:-0.021px;">Has blocked cookies</span>
<div style="left:872.4px;top:490px;width:11.5px;height:11.5px;background:#fff;box-sizing:border-box;border:1px solid #767676;border-radius:2px;"></div>
<span class="t" id="t73" style="top:490px;font-size:11px;line-height:12px;color:#595c61;left:889px;letter-spacing:-0.198px;">Blocked Requests</span>
<div style="left:984.4px;top:490px;width:11.5px;height:11.5px;background:#fff;box-sizing:border-box;border:1px solid #767676;border-radius:2px;"></div>
<span class="t" id="t74" style="top:490px;font-size:11px;line-height:12px;color:#595c61;left:1001px;letter-spacing:0.069px;">3rd-party requests</span>
<div style="left:0px;top:508px;width:1340px;height:74.5px;background:#fff;"></div>
<div style="left:75px;top:508.5px;width:1px;height:74px;background:#e3e3e3;"></div>
<div style="left:149px;top:508.5px;width:1px;height:74px;background:#e3e3e3;"></div>
<div style="left:224px;top:508.5px;width:1px;height:74px;background:#e3e3e3;"></div>
<div style="left:299px;top:508.5px;width:1px;height:74px;background:#e3e3e3;"></div>
<div style="left:373px;top:508.5px;width:1px;height:74px;background:#e3e3e3;"></div>
<div style="left:448px;top:508.5px;width:1px;height:74px;background:#e3e3e3;"></div>
<div style="left:523px;top:508.5px;width:1px;height:74px;background:#e3e3e3;"></div>
<div style="left:597px;top:508.5px;width:1px;height:74px;background:#e3e3e3;"></div>
<div style="left:672px;top:508.5px;width:1px;height:74px;background:#e3e3e3;"></div>
<div style="left:747px;top:508.5px;width:1px;height:74px;background:#e3e3e3;"></div>
<div style="left:821px;top:508.5px;width:1px;height:74px;background:#e3e3e3;"></div>
<div style="left:896px;top:508.5px;width:1px;height:74px;background:#e3e3e3;"></div>
<div style="left:971px;top:508.5px;width:1px;height:74px;background:#e3e3e3;"></div>
<div style="left:1046px;top:508.5px;width:1px;height:74px;background:#e3e3e3;"></div>
<div style="left:1120px;top:508.5px;width:1px;height:74px;background:#e3e3e3;"></div>
<div style="left:1195px;top:508.5px;width:1px;height:74px;background:#e3e3e3;"></div>
<div style="left:1270px;top:508.5px;width:1px;height:74px;background:#e3e3e3;"></div>
<div style="left:0px;top:508px;width:2px;height:15px;background:#8f8f8f;"></div>
<span class="t" id="t75" style="top:512px;font-size:9.6px;line-height:11px;color:#3a3a3a;right:1267.32px;letter-spacing:-0.42px;">2000 ms</span>
<span class="t" id="t76" style="top:512px;font-size:9.6px;line-height:11px;color:#3a3a3a;right:1192.6399999999999px;letter-spacing:-0.42px;">4000 ms</span>
<span class="t" id="t77" style="top:512px;font-size:9.6px;line-height:11px;color:#3a3a3a;right:1117.96px;letter-spacing:-0.42px;">6000 ms</span>
<span class="t" id="t78" style="top:512px;font-size:9.6px;line-height:11px;color:#3a3a3a;right:1043.28px;letter-spacing:-0.42px;">8000 ms</span>
<span class="t" id="t79" style="top:512px;font-size:9.6px;line-height:11px;color:#3a3a3a;right:968.5999999999999px;letter-spacing:-0.42px;">10000 ms</span>
<span class="t" id="t80" style="top:512px;font-size:9.6px;line-height:11px;color:#3a3a3a;right:893.92px;letter-spacing:-0.42px;">12000 ms</span>
<span class="t" id="t81" style="top:512px;font-size:9.6px;line-height:11px;color:#3a3a3a;right:819.24px;letter-spacing:-0.42px;">14000 ms</span>
<span class="t" id="t82" style="top:512px;font-size:9.6px;line-height:11px;color:#3a3a3a;right:744.56px;letter-spacing:-0.42px;">16000 ms</span>
<span class="t" id="t83" style="top:512px;font-size:9.6px;line-height:11px;color:#3a3a3a;right:669.8799999999999px;letter-spacing:-0.42px;">18000 ms</span>
<span class="t" id="t84" style="top:512px;font-size:9.6px;line-height:11px;color:#3a3a3a;right:595.1999999999999px;letter-spacing:-0.42px;">20000 ms</span>
<span class="t" id="t85" style="top:512px;font-size:9.6px;line-height:11px;color:#3a3a3a;right:520.52px;letter-spacing:-0.42px;">22000 ms</span>
<span class="t" id="t86" style="top:512px;font-size:9.6px;line-height:11px;color:#3a3a3a;right:445.8399999999999px;letter-spacing:-0.42px;">24000 ms</span>
<span class="t" id="t87" style="top:512px;font-size:9.6px;line-height:11px;color:#3a3a3a;right:371.15999999999985px;letter-spacing:-0.42px;">26000 ms</span>
<span class="t" id="t88" style="top:512px;font-size:9.6px;line-height:11px;color:#3a3a3a;right:296.48px;letter-spacing:-0.42px;">28000 ms</span>
<span class="t" id="t89" style="top:512px;font-size:9.6px;line-height:11px;color:#3a3a3a;right:221.79999999999995px;letter-spacing:-0.42px;">30000 ms</span>
<span class="t" id="t90" style="top:512px;font-size:9.6px;line-height:11px;color:#3a3a3a;right:147.1199999999999px;letter-spacing:-0.42px;">32000 ms</span>
<span class="t" id="t91" style="top:512px;font-size:9.6px;line-height:11px;color:#3a3a3a;right:72.43999999999983px;letter-spacing:-0.42px;">34000 ms</span>
<span class="t" id="t92" style="top:512px;font-size:9.6px;line-height:11px;color:#3a3a3a;left:1304.5px;letter-spacing:-0.42px;">36000 m</span>
<div style="left:1338px;top:508px;width:2px;height:15px;background:#8f8f8f;"></div>
<svg style="left:0px;top:508px;" width="1340" height="75" viewBox="0 0 1340 75"><rect x="24.8" y="22.9" width="7.2" height="1.8" fill="#a3a3a3"/><rect x="33" y="22.9" width="3.9" height="1.8" fill="#a3a3a3"/><rect x="38.4" y="22.9" width="10.6" height="1.8" fill="#a3a3a3"/><rect x="50" y="22.9" width="10.7" height="1.8" fill="#a3a3a3"/><rect x="62.5" y="22.9" width="20.5" height="1.8" fill="#a3a3a3"/><rect x="84.4" y="22.9" width="10.1" height="1.8" fill="#a3a3a3"/><rect x="95.5" y="22.9" width="2.9" height="1.8" fill="#a3a3a3"/><rect x="100" y="22.9" width="24.2" height="1.8" fill="#a3a3a3"/><rect x="125.7" y="22.9" width="21.2" height="1.8" fill="#a3a3a3"/><rect x="1.5" y="26.2" width="4.9" height="2.3" fill="#e8a23a"/><rect x="7.8" y="26.2" width="5.4" height="2.3" fill="#c652d8"/><rect x="15" y="26.2" width="5.8" height="2.3" fill="#1fb14c"/><rect x="22" y="26.2" width="14.9" height="2.3" fill="#1a9fdb"/><rect x="38.2" y="26.2" width="4.8" height="2.3" fill="#1fb14c"/><rect x="44.2" y="26.2" width="5.8" height="2.3" fill="#1a9fdb"/><rect x="51" y="26.2" width="10.5" height="2.3" fill="#a3a3a3"/><rect x="63" y="26.2" width="2.4" height="2.3" fill="#1fb14c"/><rect x="67" y="26.2" width="4.2" height="2.3" fill="#1fb14c"/><rect x="72.2" y="26.2" width="19.0" height="2.3" fill="#1a9fdb"/><rect x="93.1" y="26.2" width="75.1" height="2.3" fill="#1a9fdb"/><rect x="169.4" y="26.2" width="176.6" height="2.3" fill="#1a9fdb"/><rect x="354" y="26.2" width="6.6" height="2.3" fill="#1fb14c"/><rect x="361.5" y="26.2" width="236.0" height="2.3" fill="#1a9fdb"/><rect x="642.5" y="26.2" width="13.5" height="2.3" fill="#1fb14c"/><rect x="26.2" y="29.1" width="3.8" height="1.8" fill="#1fb14c"/><rect x="26.2" y="32" width="4.4" height="1.9" fill="#1fb14c"/><rect x="38.4" y="32" width="65.4" height="1.9" fill="#a3a3a3"/><rect x="105.2" y="32" width="4.8" height="1.9" fill="#1fb14c"/><rect x="38.4" y="34.6" width="22.3" height="1.7" fill="#a3a3a3"/><rect x="62" y="34.6" width="1" height="1.7" fill="#1a9fdb"/><rect x="66.5" y="34.6" width="9.2" height="1.7" fill="#1fb14c"/><rect x="38.4" y="37.4" width="22.3" height="1.9" fill="#a3a3a3"/><rect x="64" y="37.4" width="48.5" height="1.9" fill="#c652d8"/><rect x="113.9" y="37.4" width="3.1" height="1.9" fill="#1fb14c"/><rect x="118.4" y="37.4" width="4.8" height="1.9" fill="#1a9fdb"/><rect x="950" y="42.4" width="6" height="2.2" fill="#e8a23a"/><rect x="956" y="42.4" width="6.5" height="2.2" fill="#c652d8"/><rect x="962.5" y="42.4" width="51.5" height="2.2" fill="#8e9a9e"/><rect x="1015" y="42.4" width="13.5" height="2.2" fill="#8e9a9e"/><rect x="1028.5" y="42.4" width="10.5" height="2.2" fill="#1fb14c"/><rect x="1041.5" y="42.4" width="35.0" height="2.2" fill="#8e9a9e"/><rect x="1076.5" y="42.4" width="13.5" height="2.2" fill="#1fb14c"/></svg>
<div style="left:347px;top:526px;width:1px;height:57px;background:#2a5590;"></div>
<div style="left:352px;top:526px;width:1px;height:57px;background:#e39a96;"></div>
<div style="left:353px;top:526px;width:1px;height:57px;background:#e07f7c;"></div>
<div style="left:0px;top:582.3px;width:1340px;height:1.6px;background:#cfd1d5;"></div>
<div style="left:0px;top:584px;width:1340px;height:24.5px;background:#f1f3f4;"></div>
<div style="left:684px;top:583px;width:213px;height:25.5px;background:#c9ccd0;"></div>
<div style="left:0px;top:608px;width:1340px;height:1px;background:#cfd1d5;"></div>
<span class="t" id="t93" style="top:591px;font-size:11px;line-height:12px;color:#333638;left:5px;letter-spacing:0.114px;">Name</span>
<span class="t" id="t94" style="top:591px;font-size:11px;line-height:12px;color:#333638;left:432.5px;letter-spacing:-0.065px;">Status</span>
<span class="t" id="t95" style="top:591px;font-size:11px;line-height:12px;color:#333638;left:559.5px;letter-spacing:-0.265px;">Type</span>
<span class="t" id="t96" style="top:591px;font-size:11px;line-height:12px;color:#333638;left:688px;letter-spacing:0.302px;">Initiator</span>
<span class="t" id="t97" style="top:591px;font-size:11px;line-height:12px;color:#333638;left:902px;letter-spacing:-0.527px;">Size</span>
<span class="t" id="t98" style="top:591px;font-size:11px;line-height:12px;color:#333638;left:1030px;letter-spacing:0.063px;">Time</span>
<span class="t" id="t99" style="top:591px;font-size:11px;line-height:12px;color:#333638;left:1158px;letter-spacing:0.144px;">Waterfall</span>
<svg style="left:1322px;top:593px;" width="8" height="6.5" viewBox="0 0 8 6.5"><path d="M0 6.500L4 0L8 6.500Z" fill="#6e6e6e"/></svg>
<div style="left:0px;top:609px;width:1324px;height:14.0px;background:#f5f5f5;"></div>
<div style="left:0px;top:642.5px;width:1324px;height:19.5px;background:#f5f5f5;"></div>
<div style="left:0px;top:681.5px;width:1324px;height:19.5px;background:#f5f5f5;"></div>
<div style="left:1269px;top:609px;width:1px;height:112px;background:#e3e3e3;"></div>
<svg style="left:8px;top:608.0px;clip-path:inset(1.0px 0 0 0);" width="10" height="11.5" viewBox="0 0 10 11.5"><rect x=".6" y=".6" width="8.800" height="10.300" rx="1" fill="#fff8e1" stroke="#e8b321" stroke-width="1.200"/><path d="M3 6.500h4v2H3Z" fill="none" stroke="#e8b321" stroke-width=".8"/></svg>
<span class="t" id="t100" style="top:608px;font-size:11px;line-height:12px;color:#333638;left:24.3px;letter-spacing:-0.037px;clip-path:inset(1px 0 0 0);">sweetalert.min.js</span>
<span class="t" id="t101" style="top:608px;font-size:11px;line-height:12px;color:#333638;left:432.5px;letter-spacing:0.047px;clip-path:inset(1px 0 0 0);">200</span>
<span class="t" id="t102" style="top:608px;font-size:11px;line-height:12px;color:#333638;left:559.5px;clip-path:inset(1px 0 0 0);">script</span>
<span class="t" id="t103" style="top:608px;font-size:11px;line-height:12px;color:#333638;left:688px;letter-spacing:-0.125px;clip-path:inset(1px 0 0 0);text-decoration:underline;">26</span>
<span class="t" id="t104" style="top:608px;font-size:11px;line-height:12px;color:#333638;right:318.5px;clip-path:inset(1px 0 0 0);">41.2 kB</span>
<span class="t" id="t105" style="top:608px;font-size:11px;line-height:12px;color:#333638;right:190.5px;clip-path:inset(1px 0 0 0);">6.44 s</span>
<svg style="left:8px;top:627.5px;" width="10" height="11.5" viewBox="0 0 10 11.5"><rect x=".6" y=".6" width="8.800" height="10.300" rx="1" fill="#e6f7fb" stroke="#3bb8d8" stroke-width="1.200"/><path d="M3 3.700h4M5 3.700V8" stroke="#3bb8d8" stroke-width="1.200"/></svg>
<span class="t" id="t106" style="top:628px;font-size:11px;line-height:12px;color:#333638;left:24.3px;letter-spacing:0.122px;">fontawesome-webfont.woff2?v=4.7.0</span>
<span class="t" id="t107" style="top:628px;font-size:11px;line-height:12px;color:#333638;left:432.5px;letter-spacing:0.047px;">200</span>
<span class="t" id="t108" style="top:628px;font-size:11px;line-height:12px;color:#333638;left:559.5px;">font</span>
<span class="t" id="t109" style="top:628px;font-size:11px;line-height:12px;color:#333638;left:688px;letter-spacing:0.028px;text-decoration:underline;">font-awesome.min.css</span>
<span class="t" id="t110" style="top:628px;font-size:11px;line-height:12px;color:#333638;right:318.5px;">77.8 kB</span>
<span class="t" id="t111" style="top:628px;font-size:11px;line-height:12px;color:#333638;right:190.5px;">1.12 s</span>
<svg style="left:8px;top:647.0px;" width="10" height="11.5" viewBox="0 0 10 11.5"><rect x=".6" y=".6" width="8.800" height="10.300" rx="1" fill="#fff" stroke="#9a9a9a" stroke-width="1.100"/></svg>
<span class="t" id="t112" style="top:647px;font-size:11px;line-height:12px;color:#333638;left:24.3px;letter-spacing:0.094px;">favicon.png</span>
<span class="t" id="t113" style="top:647px;font-size:11px;line-height:12px;color:#333638;left:432.5px;letter-spacing:0.047px;">200</span>
<span class="t" id="t114" style="top:647px;font-size:11px;line-height:12px;color:#333638;left:559.5px;">png</span>
<span class="t" id="t115" style="top:647px;font-size:11px;line-height:12px;color:#777;left:688px;letter-spacing:0.097px;">Other</span>
<span class="t" id="t116" style="top:647px;font-size:11px;line-height:12px;color:#333638;right:318.5px;">1.1 MB</span>
<span class="t" id="t117" style="top:647px;font-size:11px;line-height:12px;color:#333638;right:190.5px;">6.54 s</span>
<svg style="left:8px;top:666.5px;" width="10" height="11.5" viewBox="0 0 10 11.5"><rect x=".6" y=".6" width="8.800" height="10.300" rx="1" fill="#fff" stroke="#9a9a9a" stroke-width="1.100"/></svg>
<span class="t" id="t118" style="top:667px;font-size:11px;line-height:12px;color:#333638;left:24.3px;letter-spacing:0.324px;">hourly.php</span>
<span class="t" id="t119" style="top:667px;font-size:11px;line-height:12px;color:#333638;left:432.5px;letter-spacing:0.047px;">200</span>
<span class="t" id="t120" style="top:667px;font-size:11px;line-height:12px;color:#333638;left:559.5px;">xhr</span>
<span class="t" id="t121" style="top:667px;font-size:11px;line-height:12px;color:#333638;left:688px;letter-spacing:0.026px;text-decoration:underline;">jquery.min.js:2</span>
<span class="t" id="t122" style="top:667px;font-size:11px;line-height:12px;color:#333638;right:318.5px;">124 B</span>
<span class="t" id="t123" style="top:667px;font-size:11px;line-height:12px;color:#333638;right:190.5px;">404 ms</span>
<svg style="left:8px;top:686.0px;" width="10" height="11.5" viewBox="0 0 10 11.5"><rect x=".6" y=".6" width="8.800" height="10.300" rx="1" fill="#fff" stroke="#9a9a9a" stroke-width="1.100"/></svg>
<span class="t" id="t124" style="top:686px;font-size:11px;line-height:12px;color:#333638;left:24.3px;letter-spacing:0.324px;">hourly.php</span>
<span class="t" id="t125" style="top:686px;font-size:11px;line-height:12px;color:#333638;left:432.5px;letter-spacing:0.047px;">200</span>
<span class="t" id="t126" style="top:686px;font-size:11px;line-height:12px;color:#333638;left:559.5px;">xhr</span>
<span class="t" id="t127" style="top:686px;font-size:11px;line-height:12px;color:#333638;left:688px;letter-spacing:0.026px;text-decoration:underline;">jquery.min.js:2</span>
<span class="t" id="t128" style="top:686px;font-size:11px;line-height:12px;color:#333638;right:318.5px;">214 B</span>
<span class="t" id="t129" style="top:686px;font-size:11px;line-height:12px;color:#333638;right:190.5px;">2.43 s</span>
<svg style="left:8px;top:705.5px;" width="10" height="11.5" viewBox="0 0 10 11.5"><rect x=".6" y=".6" width="8.800" height="10.300" rx="1" fill="#fff" stroke="#9a9a9a" stroke-width="1.100"/></svg>
<span class="t" id="t130" style="top:706px;font-size:11px;line-height:12px;color:#333638;left:24.3px;letter-spacing:0.324px;">hourly.php</span>
<span class="t" id="t131" style="top:706px;font-size:11px;line-height:12px;color:#333638;left:432.5px;letter-spacing:0.047px;">200</span>
<span class="t" id="t132" style="top:706px;font-size:11px;line-height:12px;color:#333638;left:559.5px;">xhr</span>
<span class="t" id="t133" style="top:706px;font-size:11px;line-height:12px;color:#333638;left:688px;letter-spacing:0.026px;text-decoration:underline;">jquery.min.js:2</span>
<span class="t" id="t134" style="top:706px;font-size:11px;line-height:12px;color:#333638;right:318.5px;">124 B</span>
<span class="t" id="t135" style="top:706px;font-size:11px;line-height:12px;color:#333638;right:190.5px;">2.01 s</span>
<div style="left:427px;top:584px;width:1px;height:137px;background:#d0d2d6;"></div>
<div style="left:555px;top:584px;width:1px;height:137px;background:#d0d2d6;"></div>
<div style="left:683px;top:584px;width:1px;height:137px;background:#d0d2d6;"></div>
<div style="left:897px;top:584px;width:1px;height:137px;background:#d0d2d6;"></div>
<div style="left:1025px;top:584px;width:1px;height:137px;background:#d0d2d6;"></div>
<div style="left:1153px;top:584px;width:1px;height:137px;background:#d0d2d6;"></div>
<div style="left:1163.5px;top:610.5px;width:11.5px;height:6.5px;background:#fff;box-sizing:border-box;border:1px solid #c2c2c2;"></div>
<div style="left:1175.8px;top:609px;width:9.5px;height:10px;background:#0fae4f;"></div>
<div style="left:1185.3px;top:609px;width:29px;height:10px;background:#049bdc;"></div>
<div style="left:1167.2px;top:630.2px;width:8px;height:5.5px;background:#fff;box-sizing:border-box;border:1px solid #c2c2c2;"></div>
<div style="left:1175.8px;top:627px;width:8.1px;height:11.8px;background:#049bdc;"></div>
<div style="left:1213.5px;top:646.3px;width:38.1px;height:12px;background:#049bdc;"></div>
<div style="left:1254.7px;top:668.5px;width:1.4px;height:7px;background:#d6d6d6;"></div>
<div style="left:1256.8px;top:666px;width:1.8px;height:11.7px;background:#0fae4f;"></div>
<div style="left:1258.5px;top:666px;width:2.5px;height:11.7px;background:#139fb0;"></div>
<div style="left:1300px;top:688px;width:2.5px;height:6.7px;background:#fff;box-sizing:border-box;border:1px solid #c8c8c8;"></div>
<div style="left:1304.5px;top:688px;width:1.6px;height:6.7px;background:#e8902a;"></div>
<div style="left:1306px;top:688px;width:1.5px;height:6.7px;background:#c652d8;"></div>
<div style="left:1317.8px;top:685.7px;width:1.8px;height:11.7px;background:#0fae4f;"></div>
<div style="left:1319.5px;top:685.7px;width:2px;height:11.7px;background:#049bdc;"></div>
<div style="left:1310.5px;top:709px;width:1.2px;height:4.5px;background:#c8c8c8;"></div>
<div style="left:1322.3px;top:705px;width:1.2px;height:12px;background:#0fae4f;"></div>
<div style="left:1210px;top:609px;width:1px;height:112px;background:#5f78c4;"></div>
<div style="left:1211px;top:609px;width:1px;height:112px;background:#cf8a9c;"></div>
<div style="left:1212px;top:609px;width:1px;height:112px;background:rgba(226,150,150,.45);"></div>
<div style="left:1324px;top:609px;width:16px;height:112px;background:#f1f1f1;"></div>
<div style="left:1325.5px;top:689.3px;width:12px;height:15.2px;background:#c1c1c1;"></div>
<svg style="left:1327.5px;top:615px;" width="8" height="6" viewBox="0 0 8 6"><path d="M0 5.500L4 1L8 5.500Z" fill="#505050"/></svg>
<svg style="left:1327.5px;top:709.5px;" width="8" height="6" viewBox="0 0 8 6"><path d="M0 .5L4 5L8 .5Z" fill="#a3a3a3"/></svg>
<svg style="left:801px;top:589.3px;" width="14" height="20" viewBox="0 0 14 20"><path d="M1.200 1L1.200 16.400L4.700 13.200L7.200 18.300L9.300 17.300L6.900 12.300L11.800 12.300Z" fill="#fff" stroke="#1a1d24" stroke-width="1.100" stroke-linejoin="round"/></svg>
<div style="left:0px;top:721px;width:1340px;height:26px;background:#f1f3f4;"></div>
<div style="left:0px;top:720.7px;width:1340px;height:1px;background:#cfd1d5;"></div>
<span class="t" id="t136" style="top:728px;font-size:11px;line-height:12px;color:#595c61;left:10px;letter-spacing:-0.017px;">42 requests</span>
<span class="t" id="t137" style="top:728px;font-size:11px;line-height:12px;color:#595c61;left:84.6px;letter-spacing:0.023px;">2.5 MB transferred</span>
<span class="t" id="t138" style="top:728px;font-size:11px;line-height:12px;color:#595c61;left:193.8px;letter-spacing:-0.138px;">3.7 MB resources</span>
<span class="t" id="t139" style="top:728px;font-size:11px;line-height:12px;color:#595c61;left:295.5px;letter-spacing:-0.236px;">Finish: 29.18 s</span>
<span class="t" id="t140" style="top:728px;font-size:11px;line-height:12px;color:#1f6fc4;left:380.5px;letter-spacing:-0.008px;">DOMContentLoaded: 9.29 s</span>
<span class="t" id="t141" style="top:728px;font-size:11px;line-height:12px;color:#c5221f;left:534.5px;letter-spacing:-0.189px;">Load: 9.43 s</span>
<div style="left:75.5px;top:727px;width:1px;height:15px;background:#d0d2d6;"></div>
<div style="left:184.5px;top:727px;width:1px;height:15px;background:#d0d2d6;"></div>
<div style="left:286.3px;top:727px;width:1px;height:15px;background:#d0d2d6;"></div>
<div style="left:371.7px;top:727px;width:1px;height:15px;background:#d0d2d6;"></div>
<div style="left:525.5px;top:727px;width:1px;height:15px;background:#d0d2d6;"></div>
<div style="left:0px;top:746.8px;width:1340px;height:53px;background:#1c3558;"></div>
<svg style="left:18.5px;top:765px;" width="15.5" height="16" viewBox="0 0 15.5 16"><path d="M2 .5h8.500l3 3V14H2Z" fill="#f4f4f4"/><path d="M10.500 .5v3h3Z" fill="#c9c9c9"/><rect x="0" y="5.300" width="15.500" height="6.800" rx=".8" fill="#e02828"/><text x="7.750" y="10.800" font-size="5.600" font-weight="700" text-anchor="middle" fill="#fff" font-family="Liberation Sans,sans-serif">PDF</text></svg>
<span class="t" id="t142" style="top:767px;font-size:12px;line-height:14px;color:#fff;left:46px;letter-spacing:-0.023px;">Individual ( Consu....pdf</span>
<svg style="left:193.5px;top:771px;" width="10" height="7" viewBox="0 0 10 7"><path d="M1 6L5 1.500L9 6" fill="none" stroke="#cfd8e6" stroke-width="1.500"/></svg>
<div style="left:220px;top:754px;width:1px;height:40px;background:#34507a;"></div>
<svg style="left:235px;top:765px;" width="15.5" height="16" viewBox="0 0 15.5 16"><path d="M2 .5h8.500l3 3V14H2Z" fill="#f4f4f4"/><path d="M10.500 .5v3h3Z" fill="#c9c9c9"/><rect x="0" y="5.300" width="15.500" height="6.800" rx=".8" fill="#e02828"/><text x="7.750" y="10.800" font-size="5.600" font-weight="700" text-anchor="middle" fill="#fff" font-family="Liberation Sans,sans-serif">PDF</text></svg>
<span class="t" id="t143" style="top:767px;font-size:12px;line-height:14px;color:#fff;left:262.6px;letter-spacing:-0.023px;">Individual ( Consu....pdf</span>
<svg style="left:410.5px;top:771px;" width="10" height="7" viewBox="0 0 10 7"><path d="M1 6L5 1.500L9 6" fill="none" stroke="#cfd8e6" stroke-width="1.500"/></svg>
<div style="left:436.5px;top:754px;width:1px;height:40px;background:#34507a;"></div>
<svg style="left:454px;top:765px;" width="12" height="15" viewBox="0 0 12 15"><path d="M.5 .5h7.500l3.500 3.500V14.500H.5Z" fill="#fafafa"/><path d="M8 .5V4h3.500Z" fill="#b8c4d6"/><rect x="2.200" y="6" width="7.600" height="6" fill="#2b6fd0"/><path d="M2.200 12l2.800-3 1.800 1.800 1.200-1 1.800 2.200Z" fill="#9cc3f5"/></svg>
<div style="left:870.5px;top:754px;width:1px;height:40px;background:#34507a;"></div>
<div style="left:479px;top:752.7px;width:382px;height:38.6px;background:#f8f9fa;"></div>
<div style="left:489px;top:767px;width:1.3px;height:10px;background:#b5b5b5;"></div>
<div style="left:492px;top:767px;width:1.3px;height:10px;background:#b5b5b5;"></div>
<span class="t" id="t144" style="top:766px;font-size:11.5px;line-height:12px;color:#202124;left:503.5px;letter-spacing:-0.246px;">srilance.softileo.com is sharing your screen.</span>
<div style="left:725.3px;top:757.3px;width:93.3px;height:29.1px;background:#1a73e8;border-radius:4px;"></div>
<span class="t" id="t145" style="top:766px;font-size:11.5px;line-height:12px;color:#fff;left:740.2px;font-weight:700;letter-spacing:-0.565px;">Stop sharing</span>
<span class="t" id="t146" style="top:766px;font-size:11.5px;line-height:12px;color:#3b78d8;left:828.5px;letter-spacing:-0.164px;">Hide</span>
<div style="left:1234px;top:758.4px;width:72.4px;height:29.1px;background:#223f69;box-sizing:border-box;border:1px solid #8597b3;border-radius:4px;"></div>
<span class="t" id="t147" style="top:767px;font-size:11.5px;line-height:12px;color:#fff;left:1248.7px;font-weight:700;letter-spacing:-0.395px;">Show all</span>
<svg style="left:1318.5px;top:768.5px;" width="9.5" height="9.5" viewBox="0 0 9.5 9.5"><path d="M1 1L8.500 8.500M8.500 1L1 8.500" stroke="#d3dae6" stroke-width="1.400"/></svg>
<div style="left:0px;top:799.5px;width:1340px;height:37.5px;background:#242424;"></div>
<svg style="left:14.8px;top:810.7px;" width="15.5" height="15.5" viewBox="0 0 15.5 15.5"><path d="M0 2.200L6.300 1.300V7.300H0ZM7.200 1.200L15.500 0V7.300H7.200ZM0 8.200H6.300V14.200L0 13.300ZM7.200 8.200H15.500V15.500L7.200 14.300Z" fill="#fff"/></svg>
<div style="left:45.3px;top:800px;width:319px;height:37px;background:#f3f3f3;"></div>
<svg style="left:55px;top:809.5px;" width="17" height="17" viewBox="0 0 17 17"><circle cx="10.300" cy="6.700" r="5.200" fill="none" stroke="#2b2b2b" stroke-width="1.300"/><path d="M6.600 10.400L1 16" stroke="#2b2b2b" stroke-width="1.400"/></svg>
<span class="t" id="t148" style="top:810px;font-size:15px;line-height:17px;color:#3b3b3b;left:82.8px;letter-spacing:-0.741px;">Type here to search</span>
<svg style="left:378.5px;top:810px;" width="17" height="17" viewBox="0 0 17 17"><circle cx="8.500" cy="8.400" r="6.500" fill="none" stroke="#fff" stroke-width="1.700"/></svg>
<svg style="left:423px;top:810.5px;" width="17" height="15" viewBox="0 0 17 15"><rect x="1.800" y="5" width="9.700" height="5.400" fill="none" stroke="#fff" stroke-width="1.100"/><path d="M1 .8c0 1.200.6 1.700 1.800 1.700h8c1.200 0 1.800-.5 1.800-1.700M1 14.200c0-1.200.6-1.700 1.800-1.700h8c1.200 0 1.800.5 1.800 1.700" fill="none" stroke="#fff" stroke-width="1.100"/><path d="M15 .8V14.200" stroke="#fff" stroke-width="1.100"/><rect x="14" y="4.600" width="2" height="2" fill="#fff"/></svg>
<div style="left:468px;top:807.3px;width:22.3px;height:21.7px;background:#404040;border-radius:2px;"></div>
<svg style="left:468px;top:807.3px;" width="22.3" height="21.7" viewBox="0 0 22.3 21.7"><path d="M5.300 7.250L17.400 3.400V8.200L5.300 12.100Z" fill="#ff9800"/><path d="M5.300 7.250L17.400 11.600V16L5.300 12.100Z" fill="#f08a00"/><path d="M17.400 11.600V16L5.300 18.900V14.500Z" fill="#ff9800"/></svg>
<div style="left:461px;top:834.5px;width:36.8px;height:2.5px;background:#76b9ed;"></div>
<svg style="left:514px;top:808px;" width="21" height="21" viewBox="0 0 21 21"><path d="M.5 3.500h7l2 2.200H20.500V18.500H.5Z" fill="#f6c443"/><path d="M.5 7.500H20.500V18.500H.5Z" fill="#fbd969"/><path d="M5.500 11h10v7.500h-2.700V14.500h-4.600V18.500H5.500Z" fill="#2f83d8"/></svg>
<div style="left:506.3px;top:834.5px;width:36.1px;height:2.5px;background:#76b9ed;"></div>
<svg style="left:558px;top:805px;" width="28" height="28" viewBox="0 0 28 28"><ellipse cx="12.500" cy="12.800" rx="10.300" ry="6.200" fill="#b9b9b9" transform="rotate(-20 12.500 12.800)"/><ellipse cx="12.500" cy="10.800" rx="10.300" ry="6.200" fill="#f7f7f7" stroke="#c9302c" stroke-width="1.400" transform="rotate(-20 12.500 10.800)"/><path d="M11.500 6L15.500 16M16.500 7L13.500 15" stroke="#8a8a8a" stroke-width="1"/><ellipse cx="15" cy="20.500" rx="1.900" ry="3.200" fill="none" stroke="#2a8ad4" stroke-width="1.700" transform="rotate(15 15 20.500)"/><ellipse cx="20.500" cy="17.500" rx="1.900" ry="3.200" fill="none" stroke="#2a8ad4" stroke-width="1.700" transform="rotate(-55 20.500 17.500)"/></svg>
<div style="left:594.3px;top:799.5px;width:42.7px;height:37.5px;background:#585858;"></div>
<div style="left:637px;top:800px;width:1.5px;height:37px;background:#3a3a3a;"></div>
<svg style="left:604.5px;top:806px;" width="26" height="26" viewBox="0 0 26 26"><path d="M11 11L2.340 6A10 10 0 0 1 19.660 6Z" fill="#db4437"/><path d="M11 11H20.900L19.660 6H11Z" fill="#db4437"/><path d="M11 11L19.660 6A10 10 0 0 1 11 21Z" fill="#f4c20d"/><path d="M11 11L11 21A10 10 0 0 1 2.340 6Z" fill="#1da362"/><path d="M11 11L15.300 13.500L11 21Z" fill="#f4c20d"/><path d="M11 11L6.700 13.500L2.340 6Z" fill="#1da362"/><circle cx="11" cy="11" r="4.700" fill="#fff"/><circle cx="11" cy="11" r="3.700" fill="#4688f1"/><circle cx="18.500" cy="18.500" r="6.800" fill="#dfe1e5"/><circle cx="18.500" cy="16.300" r="2.300" fill="#5f6368"/><path d="M14.300 22c.5-2 2-2.900 4.200-2.900s3.700.9 4.200 2.900Z" fill="#5f6368"/></svg>
<div style="left:594.3px;top:834.5px;width:42.7px;height:2.5px;background:#76b9ed;"></div>
<div style="left:651.8px;top:807.5px;width:20.4px;height:21.5px;background:#a30d0b;"></div>
<span class="t" id="t149" style="top:807px;font-size:20.5px;line-height:23px;color:#fff;left:653.2px;font-weight:700;letter-spacing:-2.391px;font-style:italic;">Fz</span>
<div style="left:643.4px;top:834.5px;width:36.6px;height:2.5px;background:#76b9ed;"></div>
<svg style="left:694px;top:806.5px;" width="24" height="24" viewBox="0 0 24 24"><path d="M8 2.500h13.500a1 1 0 0 1 1 1v15a1 1 0 0 1-1 1H8Z" fill="#f3f6fb"/><path d="M10 6h10.500M10 9h10.500M10 12h10.500M10 15h10.500" stroke="#9db8de" stroke-width="1"/><path d="M.5 3.200L12 1v21L.5 19.800Z" fill="#2b5caa"/><text x="6.200" y="16" font-size="11" font-weight="700" text-anchor="middle" fill="#fff" font-family="Liberation Sans,sans-serif">W</text></svg>
<div style="left:688px;top:834.5px;width:35px;height:2.5px;background:#76b9ed;"></div>
<div style="left:730.7px;top:799.5px;width:44.3px;height:37.5px;background:#a25e2c;"></div>
<div style="left:742.3px;top:808px;width:21.1px;height:21px;background:#fcd116;"></div>
<svg style="left:754.5px;top:820px;" width="9" height="9" viewBox="0 0 9 9"><path d="M9 0V9H0Z" fill="#3a3a3a"/></svg>
<div style="left:730.7px;top:834.5px;width:44.3px;height:2.5px;background:#f7852a;"></div>
<svg style="left:787.5px;top:806px;" width="26" height="26" viewBox="0 0 26 26"><path d="M11 11L2.340 6A10 10 0 0 1 19.660 6Z" fill="#db4437"/><path d="M11 11H20.900L19.660 6H11Z" fill="#db4437"/><path d="M11 11L19.660 6A10 10 0 0 1 11 21Z" fill="#f4c20d"/><path d="M11 11L11 21A10 10 0 0 1 2.340 6Z" fill="#1da362"/><path d="M11 11L15.300 13.500L11 21Z" fill="#f4c20d"/><path d="M11 11L6.700 13.500L2.340 6Z" fill="#1da362"/><circle cx="11" cy="11" r="4.700" fill="#fff"/><circle cx="11" cy="11" r="3.700" fill="#4688f1"/><circle cx="18.500" cy="18.500" r="6.800" fill="#dfe1e5"/><circle cx="18.500" cy="16.300" r="2.300" fill="#5f6368"/><path d="M14.300 22c.5-2 2-2.900 4.200-2.900s3.700.9 4.200 2.900Z" fill="#5f6368"/></svg>
<div style="left:783.7px;top:834.5px;width:35.8px;height:2.5px;background:#76b9ed;"></div>
<div style="left:1055.8px;top:809.6px;width:17.6px;height:17.6px;border-radius:50%;background:radial-gradient(circle at 40% 35%,#ffe04a 0,#fbc02d 55%,#f59e1b 100%);"></div>
<span class="t" id="t150" style="top:812px;font-size:13.5px;line-height:15px;color:#ececec;left:1083.5px;letter-spacing:-0.918px;">32°C</span>
<span class="t" id="t151" style="top:812px;font-size:13.5px;line-height:15px;color:#ececec;left:1118.6px;letter-spacing:-0.556px;">Sunny</span>
<svg style="left:1169.5px;top:814px;" width="12" height="8" viewBox="0 0 12 8"><path d="M1 7L6 1.500L11 7" fill="none" stroke="#f0f0f0" stroke-width="1.300"/></svg>
<svg style="left:1190px;top:812.5px;" width="16" height="13" viewBox="0 0 16 13"><rect x="3.500" y=".6" width="11.500" height="8" fill="none" stroke="#f0f0f0" stroke-width="1.100"/><path d="M9.200 8.600V11.500M6 12h6.500" stroke="#f0f0f0" stroke-width="1.100"/><rect x=".6" y="1.600" width="3.400" height="3.400" fill="#242424" stroke="#f0f0f0" stroke-width="1"/><path d="M2.300 5v4.500h3" fill="none" stroke="#f0f0f0" stroke-width="1"/></svg>
<svg style="left:1212px;top:811.5px;" width="16" height="14" viewBox="0 0 16 14"><path d="M.6 5h2.600L6.500 1.800V12.200L3.200 9H.6Z" fill="none" stroke="#f0f0f0" stroke-width="1.100" stroke-linejoin="round"/><g fill="none" stroke="#f0f0f0" stroke-width="1" stroke-linecap="round"><path d="M8.600 5c.9.900.9 3.100 0 4"/><path d="M10.600 3.300c1.800 1.800 1.800 5.600 0 7.400"/><path d="M12.600 1.600c2.700 2.700 2.700 8.100 0 10.800"/></g></svg>
<span class="t" id="t152" style="top:804px;font-size:11.5px;line-height:12px;color:#fff;left:1242px;letter-spacing:-0.475px;">5:52 PM</span>
<span class="t" id="t153" style="top:821px;font-size:11.5px;line-height:12px;color:#fff;left:1237.5px;letter-spacing:-0.408px;">10/9/2021</span>
<svg style="left:1302px;top:811px;" width="16" height="13" viewBox="0 0 16 13"><path d="M.5 .5H15.500V10H5L2.500 12.500V10H.5Z" fill="#fff"/><path d="M3 3.200h10M3 5.400h10M3 7.600h7" stroke="#242424" stroke-width=".9"/></svg>
<div style="left:1309.3px;top:818.2px;width:13.6px;height:13.6px;background:#26292d;box-sizing:border-box;border:1px solid #8a8a8a;border-radius:50%;"></div>
<span class="t" id="t154" style="top:820px;font-size:10px;line-height:11px;color:#fff;left:1313.3px;font-weight:700;">2</span>
<div style="left:1335px;top:800px;width:1px;height:37px;background:#5b5d60;"></div>
</body></html>
